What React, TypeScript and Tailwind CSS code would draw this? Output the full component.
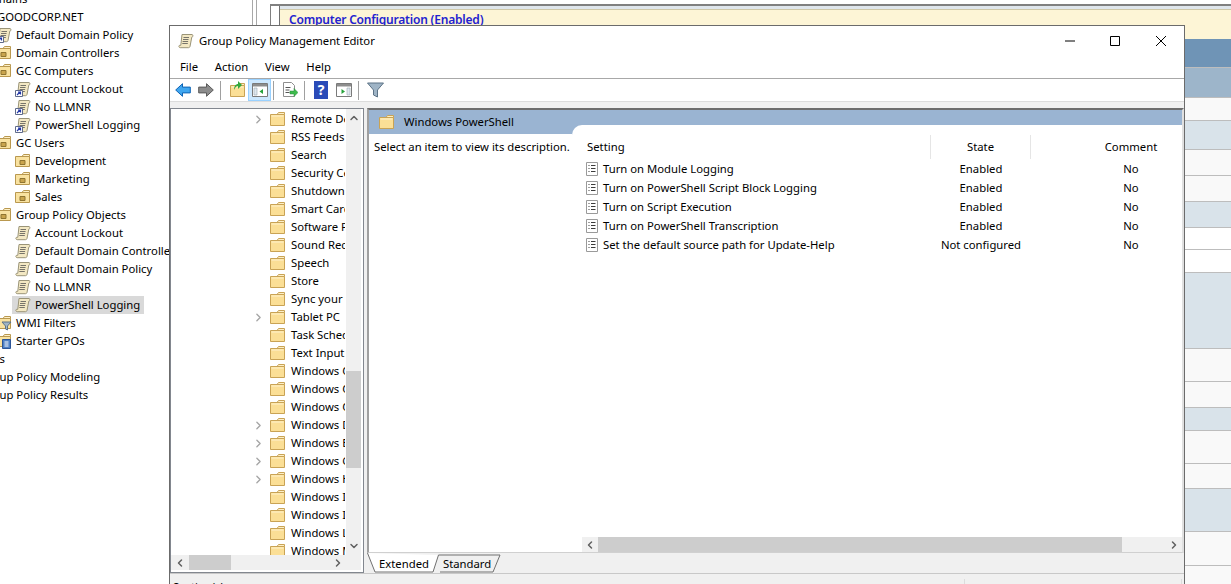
import { ChevronDown, ChevronLeft, ChevronRight, ChevronUp } from "lucide-react";

const CONSOLE_ROWS = [
  { label: "Domains", kind: "none", indent: "-ml-[20px]" },
  { label: "GOODCORP.NET", kind: "none", indent: "-ml-[3px]" },
  { label: "Default Domain Policy", kind: "link", indent: "-ml-[4px]" },
  { label: "Domain Controllers", kind: "ou", indent: "-ml-[4px]" },
  { label: "GC Computers", kind: "ou", indent: "-ml-[4px]" },
  { label: "Account Lockout", kind: "link", indent: "ml-[15px]" },
  { label: "No LLMNR", kind: "link", indent: "ml-[15px]" },
  { label: "PowerShell Logging", kind: "link", indent: "ml-[15px]" },
  { label: "GC Users", kind: "ou", indent: "-ml-[4px]" },
  { label: "Development", kind: "ou", indent: "ml-[15px]" },
  { label: "Marketing", kind: "ou", indent: "ml-[15px]" },
  { label: "Sales", kind: "ou", indent: "ml-[15px]" },
  { label: "Group Policy Objects", kind: "ou", indent: "-ml-[4px]" },
  { label: "Account Lockout", kind: "gpo", indent: "ml-[15px]" },
  { label: "Default Domain Controllers Policy", kind: "gpo", indent: "ml-[15px]" },
  { label: "Default Domain Policy", kind: "gpo", indent: "ml-[15px]" },
  { label: "No LLMNR", kind: "gpo", indent: "ml-[15px]" },
  { label: "PowerShell Logging", kind: "gpo", indent: "ml-[12px] pl-[3px]", selected: true },
  { label: "WMI Filters", kind: "wmi", indent: "-ml-[4px]" },
  { label: "Starter GPOs", kind: "starter", indent: "-ml-[4px]" },
  { label: "Sites", kind: "none", indent: "-ml-[20px]" },
  { label: "Group Policy Modeling", kind: "none", indent: "-ml-[20px]" },
  { label: "Group Policy Results", kind: "none", indent: "-ml-[20px]" },
];

const REPORT_ROWS = [
  "h-[29px] bg-[#6f94b6]",
  "h-[30px] bg-[#9db5ca]",
  "h-[23px] bg-[#f9f9f9]",
  "h-[29px] bg-[#d9e3ea]",
  "h-[26px] bg-[#f9f9f9]",
  "h-[26px] bg-[#f9f9f9]",
  "h-[26px] bg-[#d9e3ea]",
  "h-[22px] bg-white",
  "h-[23px] bg-white",
  "h-[76px] bg-[#d9e3ea]",
  "h-[33px] bg-[#f9f9f9]",
  "h-[26px] bg-[#f9f9f9]",
  "h-[23px] bg-[#d9e3ea]",
  "h-[33px] bg-[#f9f9f9]",
  "h-[25px] bg-[#f9f9f9]",
  "h-[43px] bg-[#d9e3ea]",
  "h-[34px] bg-[#f9f9f9]",
  "h-[34px] bg-[#f9f9f9]",
];

const FOLDERS = [
  { name: "Remote Desktop Services", arrow: true },
  { name: "RSS Feeds" },
  { name: "Search" },
  { name: "Security Center" },
  { name: "Shutdown Options" },
  { name: "Smart Card" },
  { name: "Software Protection Platform" },
  { name: "Sound Recorder" },
  { name: "Speech" },
  { name: "Store" },
  { name: "Sync your settings" },
  { name: "Tablet PC", arrow: true },
  { name: "Task Scheduler" },
  { name: "Text Input" },
  { name: "Windows Calendar" },
  { name: "Windows Color System" },
  { name: "Windows Customer Experience" },
  { name: "Windows Defender", arrow: true },
  { name: "Windows Error Reporting", arrow: true },
  { name: "Windows Game Recording", arrow: true },
  { name: "Windows Hello for Business", arrow: true },
  { name: "Windows Ink Workspace" },
  { name: "Windows Installer" },
  { name: "Windows Logon Options" },
  { name: "Windows Media Center" },
];

const POLICIES = [
  { name: "Turn on Module Logging", state: "Enabled" },
  { name: "Turn on PowerShell Script Block Logging", state: "Enabled" },
  { name: "Turn on Script Execution", state: "Enabled" },
  { name: "Turn on PowerShell Transcription", state: "Enabled" },
  { name: "Set the default source path for Update-Help", state: "Not configured" },
];

function FolderIcon({ className = "" }: { className?: string }) {
  return (
    <svg viewBox="0 0 15 14" className={`h-[14px] w-[15px] shrink-0 ${className}`}>
      <path d="M.5 2.5h14v11H.5z" fill="#fbdf96" stroke="#c9a355" />
      <path d="M7 2.5 8.5.5h6v2z" fill="#fdf0c8" stroke="#c9a355" />
      <path d="M1.5 4h12" stroke="#fff2cd" />
    </svg>
  );
}

function ScrollIcon({ shortcut = false }: { shortcut?: boolean }) {
  return (
    <svg viewBox="0 0 16 16" className="h-4 w-4 shrink-0">
      <path
        d="M4 1.5h10c1.2 0 1.2 2.6-.2 2.6l-1.8 9.4c-.3 1-1 1.2-1.8 1.2H2.2c-1.6 0-1.8-2.4-.4-2.4h1z"
        fill="#f3e8c3"
        stroke="#9a9478"
      />
      <path d="M5.5 4.5h5.5M5 6.5h5.5M4.6 8.5h5.5M4.3 10.5h5.5" stroke="#77746a" />
      {shortcut && (
        <>
          <path d="M.5 9.5h7v6h-7z" fill="#fff" stroke="#5f6a8a" />
          <path d="M2 14l3-3M3 11h2.5v2.5" fill="none" stroke="#2439a8" strokeWidth="1.2" />
        </>
      )}
    </svg>
  );
}

function OuIcon({ kind = "ou" }: { kind?: string }) {
  return (
    <svg viewBox="0 0 16 16" className="h-4 w-4 shrink-0">
      <path d="M.5 3.5h14v10H.5z" fill="#f9e2a0" stroke="#b9984f" />
      <path d="M7 3.5 8.5 1.5h6v2z" fill="#fdf0c8" stroke="#b9984f" />
      {kind === "ou" && <path d="M5 7.5h5v4H5z" fill="#c9a44d" stroke="#8f7430" />}
      {kind === "wmi" && <path d="M6 7h9l-3.5 4v4l-2-1v-3z" fill="#9fb4c6" stroke="#5d7386" />}
      {kind === "starter" && (
        <>
          <path d="M6.5 6.5h8v9h-8z" fill="#4d7fc4" stroke="#2c5597" />
          <path d="M8.5 9h4M8.5 11h4M8.5 13h4" stroke="#fff" />
        </>
      )}
    </svg>
  );
}

function PolicyIcon() {
  return (
    <svg viewBox="0 0 12 14" className="h-[14px] w-3 shrink-0">
      <path d="M.5.5h11v13H.5z" fill="#fff" stroke="#9a9a9a" />
      <path d="M2.5 3.5h1M5 3.5h4.5M2.5 6.5h1M5 6.5h4.5M2.5 9.5h1M5 9.5h4.5" stroke="#3c3c3c" />
    </svg>
  );
}

function ArrowIcon({ dir, blue }: { dir: "left" | "right"; blue?: boolean }) {
  return (
    <svg viewBox="0 0 16 14" className="h-[14px] w-4 shrink-0">
      <path
        d={dir === "left" ? "M.7 7 7.5.7v3.4h7.8v5.8H7.5v3.4z" : "M15.3 7 8.5.7v3.4H.7v5.8h7.8v3.4z"}
        fill={blue ? "#3fa6ef" : "#8c8c8c"}
        stroke={blue ? "#0f63b4" : "#5a5a5a"}
      />
    </svg>
  );
}

function WindowIcon({ side }: { side: "left" | "right" }) {
  return (
    <svg viewBox="0 0 16 14" className="h-[14px] w-4 shrink-0">
      <path d="M.5.5h15v13H.5z" fill="#fff" stroke="#7a7a7a" />
      <path d="M1 1h14v2.5H1z" fill="#8d8d8d" />
      {side === "left" ? (
        <>
          <path d="M2 5h3v7H2z" fill="#dfe7ee" stroke="#9aa7b3" strokeWidth=".6" />
          <path d="M11 6v5L7.5 8.5z" fill="#26a23b" />
        </>
      ) : (
        <>
          <path d="M11 5h3v7h-3z" fill="#dfe7ee" stroke="#9aa7b3" strokeWidth=".6" />
          <path d="M5.5 6v5L9 8.5z" fill="#26a23b" />
        </>
      )}
    </svg>
  );
}

function Sep() {
  return <div className="h-[19px] w-px bg-[#a0a0a0]" />;
}

function ScrollButton({ children, className = "" }: { children: React.ReactNode; className?: string }) {
  return <div className={`flex shrink-0 items-center justify-center text-[#606060] ${className}`}>{children}</div>;
}

function ConsoleTree() {
  return (
    <div className="-mt-[10px] w-[252px] shrink-0 overflow-hidden">
      {CONSOLE_ROWS.map((row, i) => (
        <div key={i} className={`flex h-[18px] w-max items-center gap-[4px] pr-[4px] ${row.indent} ${row.selected ? "bg-[#d9d9d9]" : ""}`}>
          {row.kind === "link" && <ScrollIcon shortcut />}
          {row.kind === "gpo" && <ScrollIcon />}
          {(row.kind === "ou" || row.kind === "wmi" || row.kind === "starter") && <OuIcon kind={row.kind} />}
          <span className="whitespace-nowrap">{row.label}</span>
        </div>
      ))}
    </div>
  );
}

function ReportPane() {
  return (
    <div className="flex min-w-0 flex-1">
      <div className="w-[4px] shrink-0 border-l border-[#a8a8a8]" />
      <div className="w-[14px] shrink-0 border-l border-[#a8a8a8]" />
      <div className="mt-[4px] flex min-w-0 flex-1 border-l border-t-2 border-[#808080]">
        <div className="w-[9px] shrink-0 border-r border-[#707070] bg-white" />
        <div className="min-w-0 flex-1 border-t-[3px] border-[#dfe6ec]">
          <div className="h-[30px] border-t border-[#cfc8a8] bg-[#fdf5d6] pl-[9px] pt-[2px] text-[12px] font-semibold tracking-[-0.2px] text-[#2222d0]">
            Computer Configuration (Enabled)
          </div>
          {REPORT_ROWS.map((row, i) => (
            <div key={i} className={`border-b border-[#bdbdbd] ${row}`} />
          ))}
        </div>
      </div>
    </div>
  );
}

function TreePane() {
  return (
    <div className="flex w-[194px] shrink-0 flex-col border border-[#82878f] bg-white">
      <div className="flex h-[446px] shrink-0">
        <div className="mr-px w-[174px] shrink-0 overflow-hidden pt-px">
          {FOLDERS.map((folder) => (
            <div key={folder.name} className="flex h-[18px] items-center pl-[80px]">
              <div className="flex w-[14px] shrink-0 justify-center">
                {folder.arrow && <ChevronRight size={13} strokeWidth={2.5} className="text-[#a6a6a6]" />}
              </div>
              <FolderIcon className="ml-[5px]" />
              <span className="ml-[6px] whitespace-nowrap">{folder.name}</span>
            </div>
          ))}
        </div>
        <div className="flex w-[15px] shrink-0 flex-col bg-[#f0f0f0]">
          <ScrollButton className="h-[18px]">
            <ChevronUp size={12} strokeWidth={3} />
          </ScrollButton>
          <div className="h-[244px] shrink-0" />
          <div className="h-[97px] shrink-0 bg-[#cdcdcd]" />
          <div className="flex-1" />
          <ScrollButton className="h-[18px]">
            <ChevronDown size={12} strokeWidth={3} />
          </ScrollButton>
        </div>
      </div>
      <div className="flex h-[15px] w-[190px] shrink-0 items-center bg-[#f0f0f0]">
        <ScrollButton className="h-full w-[18px]">
          <ChevronLeft size={12} strokeWidth={3} />
        </ScrollButton>
        <div className="h-full w-[42px] bg-[#cdcdcd]" />
        <div className="flex-1" />
        <ScrollButton className="mr-[15px] h-full w-[16px]">
          <ChevronRight size={12} strokeWidth={3} />
        </ScrollButton>
      </div>
    </div>
  );
}

function SettingsTable() {
  return (
    <div className="flex min-h-0 flex-1 flex-col overflow-hidden rounded-tl-[10px] bg-white">
      <div className="flex-1 overflow-hidden pl-[9px] pt-[10px]">
        <div className="grid w-[650px] grid-cols-[350px_100px_200px]">
          <div className="flex h-[24px] items-center border-r border-[#e5e5e5] pl-[6px]">Setting</div>
          <div className="flex h-[24px] items-center justify-center border-r border-[#e5e5e5]">State</div>
          <div className="flex h-[24px] items-center justify-center">Comment</div>
          {POLICIES.map((p) => (
            <div key={p.name} className="contents">
              <div className="flex h-[19px] items-center gap-[5px] pl-[5px]">
                <PolicyIcon />
                <span className="whitespace-nowrap">{p.name}</span>
              </div>
              <div className="flex h-[19px] items-center justify-center whitespace-nowrap">{p.state}</div>
              <div className="flex h-[19px] items-center justify-center">No</div>
            </div>
          ))}
        </div>
      </div>
      <div className="ml-[10px] flex h-[15px] shrink-0 items-center bg-[#f0f0f0]">
        <ScrollButton className="h-full w-[16px]">
          <ChevronLeft size={12} strokeWidth={3} />
        </ScrollButton>
        <div className="h-full w-[524px] bg-[#cdcdcd]" />
        <div className="flex-1" />
        <ScrollButton className="h-full w-[16px]">
          <ChevronRight size={12} strokeWidth={3} />
        </ScrollButton>
      </div>
    </div>
  );
}

function EditorWindow() {
  return (
    <div className="absolute left-[169px] top-[25px] flex h-[570px] w-[1016px] flex-col border border-[#6b6b6b] bg-white">
      {/* Title bar */}
      <div className="flex h-[30px] shrink-0 items-center pl-[8px]">
        <ScrollIcon />
        <span className="ml-[5px]">Group Policy Management Editor</span>
        <div className="ml-auto flex items-center">
          <svg viewBox="0 0 101 12" className="mr-[18px] h-3 w-[101px]">
            <path d="M0 6h10" stroke="#000" />
            <path d="M45.5 1.5h9v9h-9z" fill="none" stroke="#000" />
            <path d="M91 1l10 10M101 1 91 11" stroke="#000" />
          </svg>
        </div>
      </div>

      {/* Menu */}
      <div className="flex h-[23px] shrink-0 items-center gap-[16.7px] border-b border-[#a8a8a8] pl-[10px]">
        <span>File</span>
        <span>Action</span>
        <span>View</span>
        <span>Help</span>
      </div>

      {/* Toolbar */}
      <div className="flex h-[23px] shrink-0 items-center border-b border-[#dcdcdc] pl-[5px]">
        <ArrowIcon dir="left" blue />
        <div className="ml-[7px]"><ArrowIcon dir="right" /></div>
        <div className="ml-[6px]"><Sep /></div>
        <div className="relative ml-[9px]">
          <FolderIcon />
          <svg viewBox="0 0 10 10" className="absolute -top-[2px] left-[3px] h-[10px] w-[10px]">
            <path d="M1 9C1 5 3 3 5 3V0l4 4-4 4V5C3 5 2 7 1 9z" fill="#34a93f" />
          </svg>
        </div>
        <div className="ml-[3px] flex h-[22px] w-[23px] items-center justify-center border border-[#99d1ff] bg-[#cce8ff]">
          <WindowIcon side="left" />
        </div>
        <div className="ml-[2px]"><Sep /></div>
        <svg viewBox="0 0 16 16" className="ml-[8px] h-4 w-4">
          <path d="M1.5.5h8l3 3v11h-11z" fill="#fff" stroke="#8e8e8e" />
          <path d="M3.5 5.5h5M3.5 8h4M3.5 10.5h4" stroke="#555" />
          <path d="M8 9h4V6.5L16 10.5 12 14.5V12H8z" fill="#3dbb4c" stroke="#2a8a38" strokeWidth=".5" />
        </svg>
        <div className="ml-[6px]"><Sep /></div>
        <div className="ml-[9px] flex h-[18px] w-[14px] items-center justify-center bg-[#2a4bb8] text-[14px] font-bold leading-none text-white">
          ?
        </div>
        <div className="ml-[8px]"><WindowIcon side="right" /></div>
        <div className="ml-[6px]"><Sep /></div>
        <svg viewBox="0 0 17 16" className="ml-[8px] h-4 w-[17px]">
          <path d="M.5 1h16L10.5 8v7l-4-2V8z" fill="#9fb4c6" stroke="#5d7386" />
        </svg>
      </div>

      <div className="h-[6px] shrink-0 bg-[#f0f0f0]" />

      {/* Panes */}
      <div className="flex h-[465px] shrink-0 bg-[#f0f0f0]">
        <TreePane />
        <div className="ml-[3px] flex min-w-0 flex-1 flex-col">
          <div className="flex h-[445px] shrink-0 border-b border-l-2 border-r-2 border-t-2 border-b-[#d0d0d0] border-l-[#a0a0a0] border-r-[#e0e0e0] border-t-[#6d6d6d] bg-white">
            <div className="w-[203px] shrink-0">
              <div className="flex h-[24px] items-center bg-[#9ab4d2] pl-[10px]">
                <FolderIcon />
                <span className="ml-[10px]">Windows PowerShell</span>
              </div>
              <div className="whitespace-nowrap pl-[5px] pt-[5px]">Select an item to view its description.</div>
            </div>
            <div className="flex min-w-0 flex-1 flex-col bg-[#9ab4d2]">
              <div className="h-[15px] shrink-0" />
              <SettingsTable />
            </div>
          </div>

          {/* Tabs */}
          <div className="relative flex h-[20px] shrink-0 items-center pl-[12px] pt-px">
            <svg viewBox="0 0 140 20" className="absolute left-0 top-0 h-[20px] w-[140px]">
              <path d="M71.5 2H133l-7 17H73" fill="#f0f0f0" stroke="#707070" />
              <path d="M.5 0 8 19h58l5.5-17" fill="#fff" stroke="#707070" />
            </svg>
            <span className="relative">Extended</span>
            <span className="relative ml-[14px]">Standard</span>
          </div>
        </div>
      </div>

      {/* Status bar */}
      <div className="flex flex-1 border-t border-[#c8c8c8] bg-[#f0f0f0] pl-[3px] pt-[5px]">
        <span>Section(s)</span>
        <div className="ml-auto mr-[216px] h-[12px] w-px bg-[#dcdcdc]" />
        <div className="mr-[2px] h-[12px] w-px bg-[#dcdcdc]" />
      </div>
    </div>
  );
}

export default function App() {
  return (
    <div className="relative flex h-[584px] w-[1231px] overflow-hidden bg-white font-['Noto_Sans','Liberation_Sans',sans-serif] text-[11.3px] leading-4 text-black">
      <ConsoleTree />
      <ReportPane />
      <EditorWindow />
    </div>
  );
}
